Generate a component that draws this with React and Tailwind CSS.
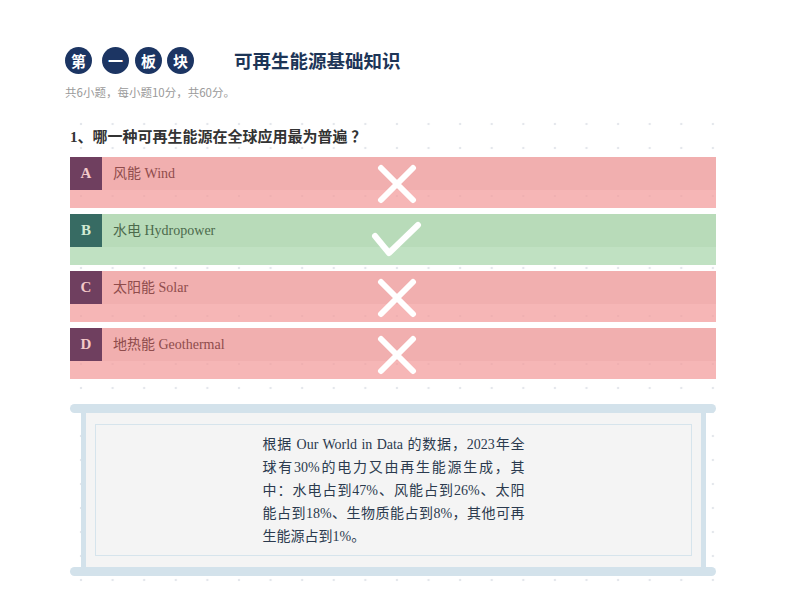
import React from "react";

const serif = { fontFamily: '"Liberation Serif", "Noto Sans CJK SC", serif' };
const sans = { fontFamily: '"Noto Sans CJK SC", "Liberation Sans", sans-serif' };

function XIcon() {
  return (
    <svg className="absolute left-[307px] top-[7px]" width="40" height="40" viewBox="0 0 40 40" fill="none">
      <path d="M4 4 L36 36 M36 4 L4 36" stroke="#ffffff" strokeWidth="6" strokeLinecap="round" />
    </svg>
  );
}

function CheckIcon() {
  return (
    <svg className="absolute left-[300px] top-[6px]" width="54" height="40" viewBox="0 0 54 40" fill="none">
      <path d="M5 16 L19 33 L48 5" stroke="#ffffff" strokeWidth="6" strokeLinecap="round" strokeLinejoin="round" />
    </svg>
  );
}

function Option({ letter, text, correct }) {
  const top = correct ? "bg-[#b8dbb9]" : "bg-[#f1afaf]";
  const bottom = correct ? "bg-[rgba(178,218,180,0.82)]" : "bg-[rgba(243,157,157,0.74)]";
  const label = correct ? "bg-[#376b63] text-[#d3ead3]" : "bg-[#6f3f5f] text-[#f3c9c9]";
  const txt = correct ? "text-[#4c6a4c]" : "text-[#8f4c4c]";
  return (
    <div className="relative h-[51px] flex flex-col">
      <div className={`h-[33px] flex items-center ${top}`}>
        <div className={`w-[32px] h-[33px] flex items-center justify-center font-bold text-[15px] ${label}`} style={serif}>
          {letter}
        </div>
        <div className={`ml-[11px] text-[14px] leading-[20px] ${txt}`} style={serif}>
          {text}
        </div>
      </div>
      <div className={`flex-1 ${bottom}`} />
      {correct ? <CheckIcon /> : <XIcon />}
    </div>
  );
}

function Line({ children, last }) {
  return (
    <div className={last ? "text-left whitespace-nowrap" : "whitespace-nowrap text-justify [text-align-last:justify]"}>{children}</div>
  );
}

export default function App() {
  return (
    <div className="w-[787px] h-[599px] bg-white overflow-hidden" style={sans}>
      <div className="pl-[65px] pt-[47px]">
        <div className="flex items-center">
          <div className="w-[27px] h-[27px] rounded-full bg-[#1c3563] text-white font-bold text-[15px] flex items-center justify-center leading-none">第</div>
          <div className="ml-[10px] w-[27px] h-[27px] rounded-full bg-[#1c3563] text-white font-bold text-[15px] flex items-center justify-center leading-none">一</div>
          <div className="ml-[6px] w-[27px] h-[27px] rounded-full bg-[#1c3563] text-white font-bold text-[15px] flex items-center justify-center leading-none">板</div>
          <div className="ml-[5px] w-[27px] h-[27px] rounded-full bg-[#1c3563] text-white font-bold text-[15px] flex items-center justify-center leading-none">块</div>
          <div className="ml-[40px] text-[18.5px] font-bold text-[#1d3557] leading-[27px]">可再生能源基础知识</div>
        </div>
        <div className="mt-[10px] text-[11.5px] leading-[16px] text-[#9a9a9a]">共6小题，每小题10分，共60分。</div>
      </div>

      <div
        className="ml-[70px] mt-[15px] w-[646px] h-[470px] bg-[radial-gradient(circle,#e4e7ec_1.1px,transparent_1.6px)] bg-[length:31.6px_24px] bg-[position:-4.8px_-3px]"
      >
        <div className="pt-[12px] text-[15px] font-bold leading-[20px] text-[#333333]" style={serif}>
          1、哪一种可再生能源在全球应用最为普遍 ？
        </div>
        <div className="mt-[10px] flex flex-col gap-[6px]">
          <Option letter="A" text="风能 Wind" />
          <Option letter="B" text="水电 Hydropower" correct />
          <Option letter="C" text="太阳能 Solar" />
          <Option letter="D" text="地热能 Geothermal" />
        </div>

        <div className="mt-[25px] flex flex-col">
          <div className="h-[9px] rounded-full bg-[#d3e2eb]" />
          <div className="ml-[11px] mr-[10px] h-[154px] border-x-[5px] border-[#d3e2eb] bg-[#f4f4f4] pt-[11px] pl-[9px] pr-[9px]">
            <div className="h-[132px] border border-[#d6e4ec] pt-[8px] flex justify-center">
              <div className="w-[262px] text-[14px] leading-[23px] text-[#2b3a4e]" style={serif}>
                <Line>根据 Our World in Data 的数据，2023年全</Line>
                <Line>球有30%的电力又由再生能源生成，其</Line>
                <Line>中：水电占到47%、风能占到26%、太阳</Line>
                <Line>能占到18%、生物质能占到8%，其他可再</Line>
                <Line last>生能源占到1%。</Line>
              </div>
            </div>
          </div>
          <div className="h-[9px] rounded-full bg-[#d3e2eb]" />
        </div>
      </div>
    </div>
  );
}
